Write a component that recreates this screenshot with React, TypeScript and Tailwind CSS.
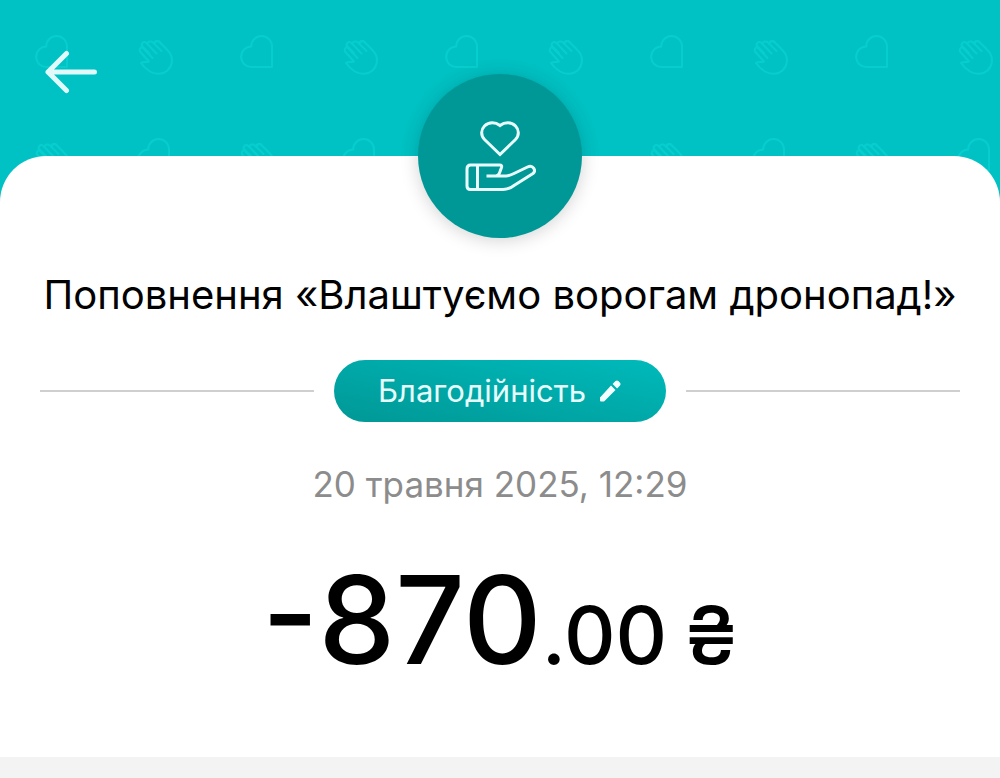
import React from 'react';

const BackgroundPattern: React.FC = () => (
  <svg className="absolute inset-0 h-full w-full" aria-hidden="true">
    <defs>
      <g id="heart">
        <path d="M32 32H11.7A10.3 10.3 0 0 1 11.2 11.4A10.3 10.3 0 0 1 32 11.5Z" />
      </g>
      <g id="hand">
        <path d="M11 13L4.5 6.5C2 8 .8 10 2.4 12L11 21.5C8 22.4 5.5 21.8 3 23C5 26 8 29 12 31.5C18 35 25 34.5 29.5 30.5C34 26.5 35.5 19.5 32.5 14C30.5 10.5 26 6.5 21.5 2C20 .5 17.8 .8 17 2.5" />
        <path d="M14.5 18L4.5 7.5C2 4 5.5 .3 8.5 3L18.5 13.5" />
        <path d="M9.5 3.8C9.5 1.5 13 .5 15 2.5L23.5 11" />
        <path d="M16 3.5C17 1 19.5 .3 21.5 2" />
      </g>
      <pattern id="charity" width="205" height="205" patternUnits="userSpaceOnUse">
        <g fill="none" stroke="#06cecf" strokeWidth="2" strokeLinejoin="round" strokeLinecap="round">
          <use href="#heart" x="35" y="35" />
          <use href="#hand" x="138" y="40" />
          <use href="#hand" x="35" y="143" />
          <use href="#heart" x="137" y="138" />
        </g>
      </pattern>
    </defs>
    <rect width="100%" height="100%" fill="url(#charity)" />
  </svg>
);

const BackIcon: React.FC = () => (
  <svg
    viewBox="0 0 56 44"
    className="h-11 w-14"
    fill="none"
    stroke="#e0f9f9"
    strokeWidth="5"
    strokeLinecap="round"
    strokeLinejoin="round"
    aria-hidden="true"
  >
    <path d="M24.5 3.5L6 22L24.5 40.5M6 22H52.5" />
  </svg>
);

const CharityIcon: React.FC = () => (
  <svg
    viewBox="0 0 72 72"
    className="h-18 w-18"
    fill="none"
    stroke="#e8fffd"
    strokeWidth="3"
    strokeLinejoin="round"
    aria-hidden="true"
  >
    <path
      d="M36 34.5L20.5 19.5C16.5 15.5 17 9.5 20.5 6C25 1.5 31.5 2 36 5.5C40.5 2 47 1.5 51.5 6C55 9.5 55.5 15.5 51.5 19.5Z"
      strokeLinejoin="miter"
    />
    <path d="M22.5 56H42C45 56 48 54.5 50 53.5L63.5 47C69 44.5 72.5 50.5 69 53.5L50 65.5C46 68.5 43.5 69.5 39 69.5H6.5C4 69.5 3 68 3 66V49C3 46.5 4.5 45 6.5 45H35.5C37.5 45 38 46 37.5 47.5L35.5 53C35 54.5 34 55.5 32 56" />
    <path d="M13.5 45V69.5" />
  </svg>
);

const PencilIcon: React.FC = () => (
  <svg viewBox="0 0 24 24" className="h-6 w-6" fill="#f2fffe" aria-hidden="true">
    <path d="M2 18.5V21.5Q2 22.5 3 22.5H6L17.5 11L13 6.5ZM14.6 4.9L19.1 9.4L22 6.5Q23.3 5 22 3.7L20.3 2Q19 .9 17.5 2Z" />
  </svg>
);

const App: React.FC = () => {
  return (
    <div className="min-h-screen bg-[#f3f3f3] font-[Inter,sans-serif]">
      <header className="relative h-60 bg-[#00c1c3] px-[42px] pt-[50px]">
        <BackgroundPattern />
        <button type="button" aria-label="Назад" className="relative block">
          <BackIcon />
        </button>
      </header>

      <main className="relative -mt-21 flex flex-col items-center rounded-t-[46px] bg-white px-10 pb-[50px]">
        <div className="-mt-[82px] flex h-41 w-41 items-center justify-center rounded-full bg-[#009896] shadow-[0_2px_18px_rgba(0,0,0,0.18)]">
          <CharityIcon />
        </div>

        <h1 className="mt-8 text-center text-[40px] leading-[50px] whitespace-nowrap text-black">
          Поповнення «Влаштуємо ворогам дронопад!»
        </h1>

        <div className="mt-10 flex w-full items-center gap-5">
          <div className="h-0.5 flex-1 bg-[#cfcfcf]" />
          <button
            type="button"
            className="flex h-[62px] items-center gap-3 rounded-full bg-linear-to-tr from-[#009896] to-[#00babb] px-11 text-[31px] text-[#e6fffd]"
          >
            Благодійність
            <PencilIcon />
          </button>
          <div className="h-0.5 flex-1 bg-[#cfcfcf]" />
        </div>

        <time dateTime="2025-05-20T12:29" className="mt-[38px] text-[35px] leading-12 text-[#8c8c8c]">
          20 травня 2025, 12:29
        </time>

        <p className="mt-10 text-[122px] leading-36 font-medium whitespace-nowrap text-black">
          -870
          <span className="text-[80px]">
            .00 <span className="-ml-1">₴</span>
          </span>
        </p>
      </main>
    </div>
  );
};

export default App;
